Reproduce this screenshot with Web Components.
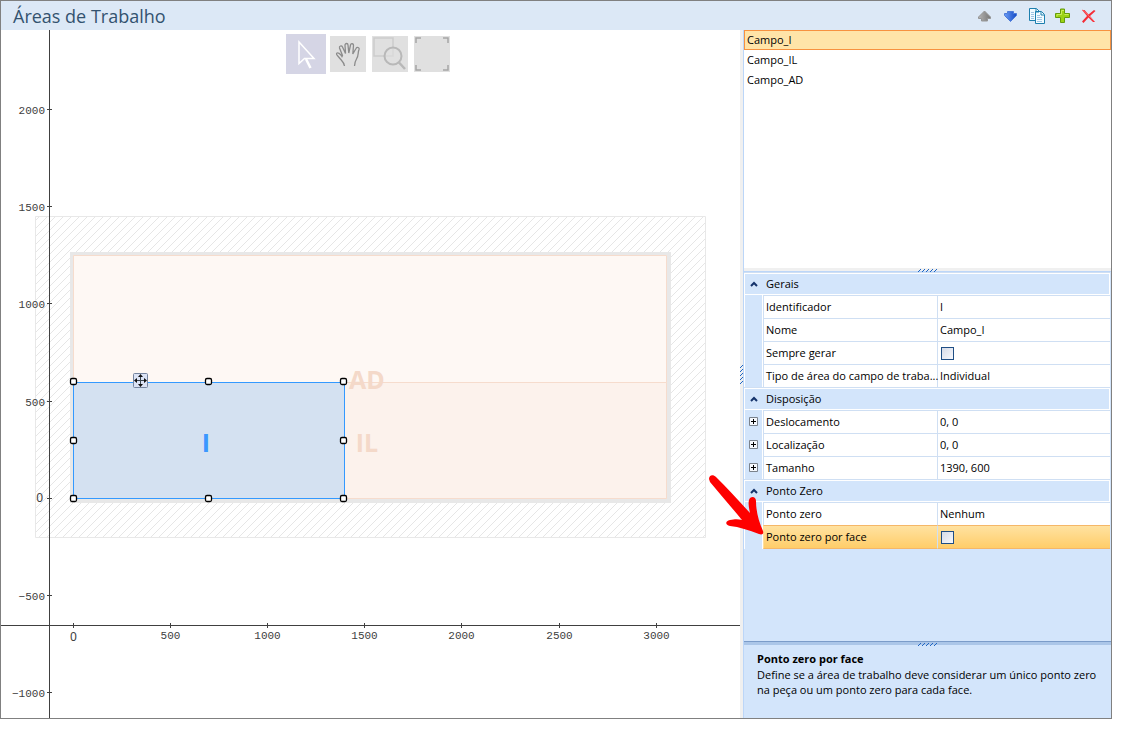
<!DOCTYPE html>
<html lang="pt-BR">
<head>
<meta charset="utf-8">
<title>Áreas de Trabalho</title>
<style>
body { margin: 0; background: #fff; color: #000; font: 11px/16px "Open Sans", "Noto Sans", sans-serif; }
</style>
</head>
<body>
<work-areas-window>
  <title-bar slot="header">Áreas de Trabalho</title-bar>
  <area-canvas slot="canvas"></area-canvas>
  <area-list slot="list">
    <area-item selected>Campo_I</area-item>
    <area-item>Campo_IL</area-item>
    <area-item>Campo_AD</area-item>
  </area-list>
  <property-grid slot="props"></property-grid>
  <help-pane slot="help">
    <span slot="title">Ponto zero por face</span>
    Define se a área de trabalho deve considerar um único ponto zero na peça ou um ponto zero para cada face.
  </help-pane>
</work-areas-window>

<script>
class Base extends HTMLElement {
  constructor() {
    super();
    this.attachShadow({ mode: 'open' }).innerHTML = this.constructor.html;
  }
}

class WorkAreasWindow extends Base {
  static html = `
  <style>
    :host { display: flex; flex-direction: column; box-sizing: border-box; min-height: calc(100vh - 20px);
      margin: 0 12px 20px 0; border: 1px solid #808080; }
    .body { display: flex; flex: 1; min-width: 0; }
    .canvas { display: grid; flex: 1; min-width: 0; }
    .gutter { display: flex; flex-direction: column; align-items: center; justify-content: center; width: 3px; background: #f0f0f0; }
    aside { display: flex; flex-direction: column; box-sizing: border-box; width: 368px; border-left: 1px solid #bcd6f8; background: #d3e5fb; }
    slot[name=props]::slotted(*) { flex: 1; }
  </style>
  <slot name="header"></slot>
  <div class="body">
    <div class="canvas"><slot name="canvas"></slot></div>
    <div class="gutter"><split-grip vertical></split-grip></div>
    <aside>
      <slot name="list"></slot>
      <split-bar></split-bar>
      <slot name="props"></slot>
      <split-bar dark></split-bar>
      <slot name="help"></slot>
    </aside>
  </div>`;
}

class SplitGrip extends Base {
  static html = `
  <style>
    :host { display: block; line-height: 0; }
    .v { display: none; }
    :host([vertical]) .v { display: block; }
    :host([vertical]) .h { display: none; }
    path { stroke: #1f66c4; fill: none; }
  </style>
  <svg class="h" width="20" height="3"><path d="M0 3L3 0M4 3L7 0M8 3L11 0M12 3L15 0M16 3L19 0"/></svg>
  <svg class="v" width="3" height="19"><path d="M0 3L3 0M0 7L3 4M0 11L3 8M0 15L3 12M0 19L3 16"/></svg>`;
}

class SplitBar extends Base {
  static html = `
  <style>
    :host { display: flex; justify-content: center; height: 3px; background: #f0f0f0; border-bottom: 1px solid #bcd6f8; }
    :host([dark]) { background: #abc6e8; border-top: 1px solid #7b9cc9; border-bottom: 0; }
  </style><split-grip></split-grip>`;
}

class TitleBar extends Base {
  static html = `
  <style>
    :host { display: flex; align-items: center; height: 29px; padding: 0 9px 0 12px; background: #dce8f6; }
    h1 { flex: 1; margin: 0; font: 18px/26px "Open Sans", "Noto Sans", sans-serif; color: #33526f; }
    button { display: block; width: 26px; height: 26px; padding: 5px; border: 0; background: none; }
    svg { display: block; }
    div { display: flex; }
  </style>
  <h1><slot></slot></h1>
  <div>
    <button aria-label="Mover para cima"><svg width="16" height="16"><defs><linearGradient id="g"><stop stop-color="#b4b4b4"/><stop offset="1" stop-color="#777"/></linearGradient></defs><path d="M7.500 3L13.500 9V10.500H10.500V13H4.500V10.500H1.500V9Z" fill="url(#g)" stroke="#959595"/></svg></button>
    <button aria-label="Mover para baixo"><svg width="16" height="16"><defs><linearGradient id="b"><stop stop-color="#699bf5"/><stop offset="1" stop-color="#174cc5"/></linearGradient></defs><path d="M7.500 13.500L1.500 7.500V5.500H4.500V3.500H10.500V5.500H13.500V7.500Z" fill="url(#b)" stroke="#4c7ad8"/></svg></button>
    <button aria-label="Duplicar"><svg width="17" height="16"><g fill="#f2fbff" stroke="#1d7fae"><path d="M.5 .5H7.500L10.500 3.500V12.500H.5Z"/><path d="M6.500 3.500H12.500L15.500 6.500V15.500H6.500Z"/><path d="M7 1V4H10M12 4V7H15" fill="none"/></g><path d="M2 4.500H5M2 6.500H5M2 8.500H5M2 10.500H5M8 7.500H11M8 9.500H13M8 11.500H13M8 13.500H13" stroke="#9fc4e3"/></svg></button>
    <button aria-label="Adicionar"><svg width="16" height="16"><path d="M5.500 1H9.500V5.500H14.500V9.500H9.500V14.500H5.500V9.500H.5V5.500H5.500Z" fill="#9bd315" stroke="#659c0b"/><path d="M6.500 6.500V2.500H9M2 8.500V6.500H6.500M9.500 6.500H13.500" fill="none" stroke="#c9ee5a"/></svg></button>
    <button aria-label="Excluir"><svg width="16" height="16"><path d="M1 2L3.500 2L7.500 6.500L13 2L14.500 3L9 8L14 14H12L7.500 9.500L2.500 15L1 13.500L6 8Z" fill="#f42c36"/><path d="M1.500 2L7.500 7.500L13.500 13.500" fill="none" stroke="#ff6b70"/></svg></button>
  </div>`;
}

class AreaCanvas extends Base {
  static html = `
  <style>
    :host { display: grid; min-width: 0; background: #fff; }
    nav, svg.plot { grid-area: 1 / 1; }
    nav { display: flex; justify-content: center; align-items: center; align-self: start; gap: 6px; height: 40px; padding: 4px 5px 0 0; z-index: 1; }
    button { display: block; width: 36px; height: 36px; padding: 0; border: 0; background: #e0e0e0; }
    button.on { width: 40px; height: 40px; margin-right: -2px; background: #d5d5e5; }
    button svg { display: block; width: 100%; height: 100%; fill: none; }
    .plot { display: block; width: 100%; height: 100%; min-height: 688px; }
    .ticks text { font: 11px "Liberation Mono", monospace; fill: #404040; }
    .ticks .zero { font: 12px "Noto Sans", sans-serif; }
    .names { font: bold 25px "Open Sans", sans-serif; text-anchor: middle; fill: #f4d9c9; }
  </style>
  <nav>
    <button class="on" aria-label="Selecionar"><svg viewBox="0 0 40 40" stroke="#fff" stroke-width="1.500"><path d="M13 8V29.500L18.500 24.500H28Z"/><path d="M20 25L24.500 34" stroke-width="2.500"/></svg></button>
    <button aria-label="Mover"><svg viewBox="0 0 36 36" stroke="#8b8b8b" stroke-width="1.300"><path d="M14.500 30C14 26 11.500 24.500 9.500 22C8 20 6 18.500 6.500 17.500C7.500 16 10.500 17.500 12 20.500L12.500 19.500L9.500 12C9 10 11.500 9 12.500 11L15.500 17.500L15 9C15 7 18 7 18 9L18.800 17L20.500 9C21 7 23.700 7.500 23.500 9.500L22.800 18L26 12.500C27 10.500 29.800 11.500 29 13.500C27.500 17 29 19 26.500 23C25 25.500 24.500 27 24.500 30"/></svg></button>
    <button aria-label="Zoom"><svg viewBox="0 0 36 36"><path d="M2 2H21V20H2Z" stroke="#cbcbcb" stroke-width="1.500"/><circle cx="21" cy="20" r="8.500" fill="#e0e0e0" fill-opacity=".6" stroke="#b8b8b8" stroke-width="2"/><path d="M27 26.500L33 33" stroke="#b8b8b8" stroke-width="2.500"/></svg></button>
    <button aria-label="Ajustar à janela"><svg viewBox="0 0 36 36" stroke="#a5a5a5" stroke-width="1.500"><path d="M2 7V2H7M29 2H34V7M34 29V34H29M7 34H2V29"/></svg></button>
  </nav>
  <svg class="plot">
    <defs><pattern id="hatch" width="8" height="8" patternUnits="userSpaceOnUse"><path d="M-1 9L9 -1M-1 1L1 -1M7 9L9 7" stroke="#e6e6e6"/></pattern></defs>
    <g transform="translate(-1 -30)">
      <path d="M35.500 216.500H705.500V537.500H35.500Z" fill="url(#hatch)" stroke="#e8e8e8"/>
      <path d="M70 252H671V503H70Z" fill="#e8e8e8"/>
      <path d="M73.500 255.500H666.500V498.500H73.500Z" fill="#fef8f4" stroke="#f6dccd"/>
      <path d="M73.500 382.500H666.500V498.500H73.500Z" fill="#fcf2ec" stroke="#f6dccd"/>
      <g class="names"><text x="367" y="389">AD</text><text x="367" y="452">IL</text></g>
      <path d="M73.500 382.500H344.500V498.500H73.500Z" fill="#d4e1f1" stroke="#3399ff"/>
      <g class="names"><text x="206" y="452" style="fill:#3b97ff">I</text></g>
      <g id="handles" fill="#fff" stroke="#000" stroke-width="1.300"></g>
      <g stroke="#3c4650"><rect x="133.500" y="373.500" width="14" height="14" rx="1" fill="#dbe3f5" stroke="#75849e"/>
        <path d="M140.500 375V386M135 380.500H146"/><path d="M140.500 374L143 377H138ZM140.500 387L143 384H138ZM134 380.500L137 378V383ZM147 380.500L144 378V383Z" fill="#111" stroke="none"/></g>
      <g class="ticks"></g>
    </g>
  </svg>`;
  connectedCallback() {
    const root = this.shadowRoot;
    root.querySelector('#handles').innerHTML = [73, 208, 343].flatMap(x => [381, 440, 498]
      .filter(y => !(x === 208 && y === 440))
      .map(y => `<rect x="${x - 2.5}" y="${y - 2.5}" width="6" height="6" rx="1.500"/>`)).join('');
    let d = 'M49.5 30V2000M0 625.5H3000', labels = '';
    [2000, 1500, 1000, 500, 0, -500, -1000].forEach((v, i) => {
      const y = 109 + Math.round(i * 97.2);
      d += `M47 ${y}.5H52`;
      labels += `<text x="${v ? 45 : 43}" y="${y + (v ? 5 : 4)}" text-anchor="end" class="${v ? '' : 'zero'}">${String(v).replace('-', '−')}</text>`;
    });
    [0, 500, 1000, 1500, 2000, 2500, 3000].forEach((v, i) => {
      const x = 73 + Math.round(i * 97.1);
      d += `M${x}.5 623V628`;
      labels += `<text x="${x}.5" y="${v ? 639 : 641}" text-anchor="middle" class="${v ? '' : 'zero'}">${v}</text>`;
    });
    root.querySelector('.ticks').innerHTML = `<path d="${d}" stroke="#404040"/>${labels}`;
  }
}

class AreaList extends Base {
  static html = `
  <style>:host { display: block; height: 238px; background: #fff; }</style>
  <slot></slot>`;
}

class AreaItem extends Base {
  static html = `
  <style>
    :host { display: block; }
    button { display: block; box-sizing: border-box; width: 100%; height: 20px; padding: 0 2px; border: 1px solid transparent;
      background: none; font: inherit; line-height: 18px; color: inherit; text-align: left; }
    :host([selected]) button { border-color: #f7923f; background: #ffe4a8; }
  </style>
  <button><slot></slot></button>`;
}

class PropertyGrid extends Base {
  static groups = [
    ['Gerais', [['Identificador', 'I'], ['Nome', 'Campo_I'], ['Sempre gerar', false], ['Tipo de área do campo de traba...', 'Individual']]],
    ['Disposição', [['Deslocamento', '0, 0', '+'], ['Localização', '0, 0', '+'], ['Tamanho', '1390, 600', '+']]],
    ['Ponto Zero', [['Ponto zero', 'Nenhum'], ['Ponto zero por face', false, 'on']]]
  ];
  static html = `
  <style>
    :host { display: block; padding-right: 1px; }
    table { width: 100%; border-collapse: separate; border-spacing: 0; table-layout: fixed; }
    col.mark { width: 19px; } col.name { width: 174px; }
    th, td { box-sizing: border-box; height: 23px; padding: 0; font-weight: normal; text-align: left; white-space: nowrap; }
    .cat { border-top: 1px solid #cfdff3; box-shadow: inset 0 0 0 1px #fff; background: #d3e5fb; }
    .cat button { display: flex; align-items: center; width: 100%; height: 22px; padding: 0 6px; gap: 8px; border: 0; background: none; font: inherit; color: inherit; }
    .mark { border-left: 1px solid #fff; border-right: 1px solid #fff; }
    td.mark button { display: block; width: 9px; height: 9px; margin: 0 4px; padding: 0; border: 0; background: none; }
    svg { display: block; }
    .name, .val { background: #fff; border-top: 1px solid #cfdff3; border-left: 1px solid #cfdff3; padding-left: 2px; }
    tr.on > * { height: 24px; }
    tr.on .name, tr.on .val { border-top-color: #f5b768; border-bottom: 1px solid #f5b768; background: linear-gradient(#ffe2a1, #ffcd69); }
    tr.on .name { position: relative; border-left-color: #ffdf9c; }
    input { appearance: none; display: block; box-sizing: border-box; width: 13px; height: 13px; margin: 0 1px; border: 1px solid #1f4e85; background: linear-gradient(135deg, #d5dbe8, #f7f8fc); }
    .arrow { position: absolute; left: -57px; bottom: 8px; z-index: 2; pointer-events: none; }
  </style>
  <table><colgroup><col class="mark"><col class="name"><col></colgroup><tbody></tbody></table>`;
  connectedCallback() {
    let n = 0;
    const chevron = '<svg width="8" height="6"><path d="M1 5L4 2L7 5" fill="none" stroke="#14336b" stroke-width="2"/></svg>';
    const plus = name => `<button aria-label="Expandir ${name}"><svg width="9" height="9"><path d="M.5 .5H8.500V8.500H.5Z" fill="#f5f8fd" stroke="#7a828c"/><path d="M2 4.500H7M4.500 2V7" stroke="#000"/></svg></button>`;
    const arrow = '<svg class="arrow" width="60" height="66" viewBox="0 0 60 66"><path d="M2 5C2 1 6 0 9 3C20 14 32 27 43 39C42 34 41 30 42 26C43 22 49 22 49 27C49 38 52 48 56 57C57 60 55 61 52 60C42 56 32 53 23 52C18 51 18 47 23 46C28 45 31 45 35 46C25 34 14 21 3 8Z" fill="#fe0000"/></svg>';
    this.shadowRoot.querySelector('tbody').innerHTML = PropertyGrid.groups.map(([title, rows]) =>
      `<tr><th class="cat" colspan="3"><button>${chevron}<span>${title}</span></button></th></tr>` +
      rows.map(([name, value, flag]) => {
        const id = 'p' + n++, check = value === false;
        return `<tr class="${flag === 'on' ? 'on' : ''}"><td class="mark">${flag === '+' ? plus(name) : ''}</td>` +
          `<th class="name">${check ? `<label for="${id}">${name}</label>` : name}${flag === 'on' ? arrow : ''}</th>` +
          `<td class="val">${check ? `<input type="checkbox" id="${id}">` : value}</td></tr>`;
      }).join('')).join('');
  }
}

class HelpPane extends Base {
  static html = `
  <style>
    :host { display: block; box-sizing: border-box; height: 73px; padding: 6px 13px; line-height: 15px; }
    h2 { margin: 0; font: bold 11px/16px "Open Sans", "Noto Sans", sans-serif; }
    p { margin: 0; }
  </style>
  <h2><slot name="title"></slot></h2>
  <p><slot></slot></p>`;
}

customElements.define('split-grip', SplitGrip);
customElements.define('split-bar', SplitBar);
customElements.define('title-bar', TitleBar);
customElements.define('area-canvas', AreaCanvas);
customElements.define('area-item', AreaItem);
customElements.define('area-list', AreaList);
customElements.define('property-grid', PropertyGrid);
customElements.define('help-pane', HelpPane);
customElements.define('work-areas-window', WorkAreasWindow);
</script>
</body>
</html>
